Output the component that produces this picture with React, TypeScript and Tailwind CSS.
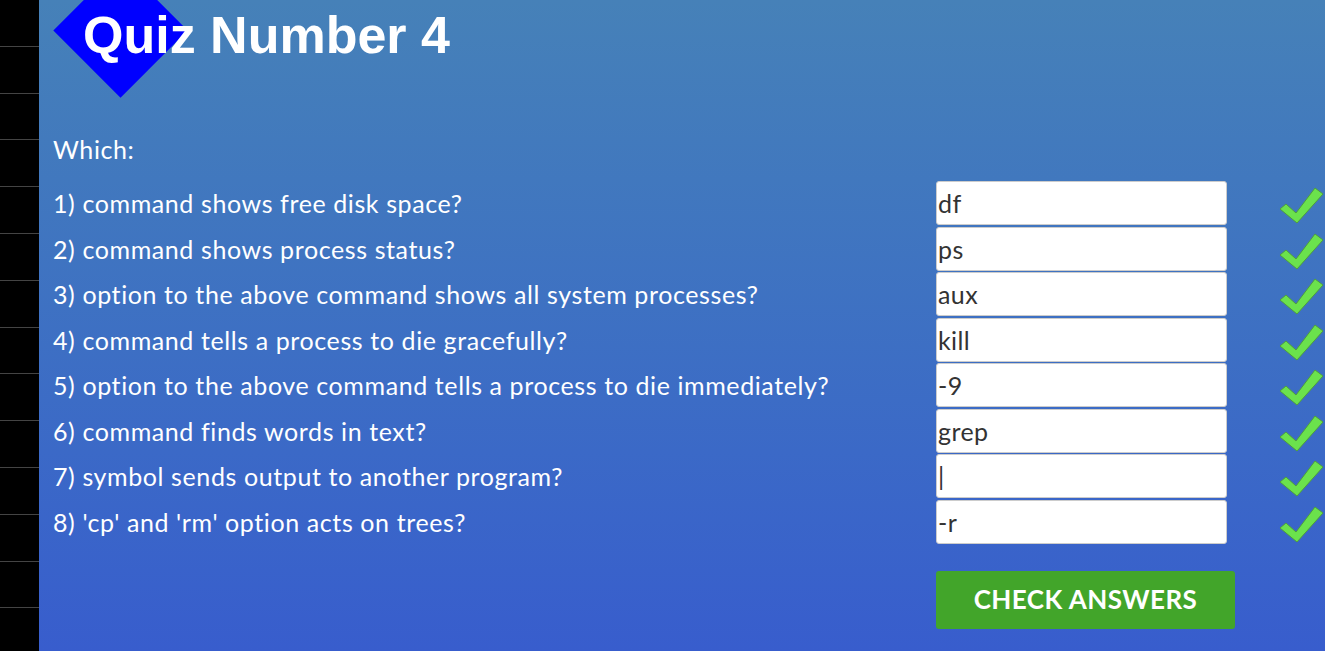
const questions = [
  { q: "1) command shows free disk space?", a: "df" },
  { q: "2) command shows process status?", a: "ps" },
  { q: "3) option to the above command shows all system processes?", a: "aux" },
  { q: "4) command tells a process to die gracefully?", a: "kill" },
  { q: "5) option to the above command tells a process to die immediately?", a: "-9" },
  { q: "6) command finds words in text?", a: "grep" },
  { q: "7) symbol sends output to another program?", a: "|" },
  { q: "8) 'cp' and 'rm' option acts on trees?", a: "-r" },
];

const Check = () => (
  <svg width="46" height="38" viewBox="8 6 46 38" aria-hidden>
    <path
      d="M9 29 L15 24 L25 33 L44 8 L52 14 L26 43 Z"
      fill="#6be24c"
      stroke="#4f9e3e"
      strokeWidth="1"
      strokeLinejoin="round"
    />
  </svg>
);

export default function App() {
  return (
    <div className="flex h-[651px] w-full overflow-hidden font-['Lato','Liberation_Sans',sans-serif]">
      {/* sidebar strip */}
      <aside className="w-[39px] shrink-0 bg-black">
        {Array.from({ length: 14 }).map((_, i) => (
          <div key={i} className="h-[46.8px] border-b border-[#444]" />
        ))}
      </aside>

      <main className="relative flex-1 bg-gradient-to-b from-[#4681b8] to-[#385dcd] pl-[14px] text-white">
        <div className="absolute left-[34px] top-[-17px] h-[95px] w-[95px] rotate-45 bg-[#0000ff]" />
        <h1 className="relative ml-[30px] mt-[9px] h-[52px] font-['Liberation_Sans',Arial,sans-serif] text-[52px] font-bold leading-none">
          Quiz Number 4
        </h1>

        <p className="mt-[66px] h-[44px] text-[25px] leading-[44px] tracking-[0.6px]">Which:</p>

        <div className="mt-[10px] flex flex-col gap-[1.5px]">
          {questions.map((row) => (
            <div key={row.q} className="grid grid-cols-[883px_291px_1fr] items-center">
              <span className="text-[25px] leading-[44px] tracking-[0.6px]">{row.q}</span>
              <input
                readOnly
                value={row.a}
                className="h-[44px] w-full rounded-[3px] border border-[#ccc] bg-white pl-px text-[25px] tracking-[0.4px] text-[#333] outline-none"
              />
              <div className="ml-[52px] mt-[4px] flex">
                <Check />
              </div>
            </div>
          ))}
        </div>

        <button className="ml-[883px] mt-[27px] h-[58px] w-[299px] rounded-[3px] bg-[#42a52a] text-[26px] font-bold tracking-[0.45px] text-white">
          CHECK ANSWERS
        </button>
      </main>
    </div>
  );
}
